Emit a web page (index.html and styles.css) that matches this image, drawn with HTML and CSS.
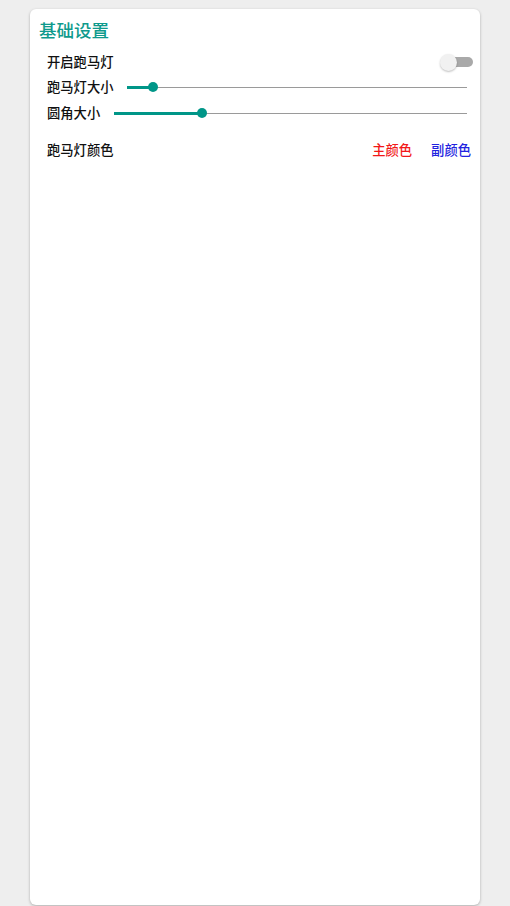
FILE: index.html
```html
<!DOCTYPE html>
<html lang="zh">
<head>
<meta charset="utf-8">
<title>基础设置</title>
<link rel="stylesheet" href="styles.css">
</head>
<body>
<div class="card">
  <div class="title">基础设置</div>
  <div class="row row-toggle">
    <span class="label">开启跑马灯</span>
    <span class="switch"><span class="switch-track"></span><span class="switch-thumb"></span></span>
  </div>
  <div class="row row-s1">
    <span class="label">跑马灯大小</span>
    <div class="slider">
      <div class="slider-rail"></div>
      <div class="slider-fill" style="width:7.4%"></div>
      <div class="slider-thumb" style="left:7.4%"></div>
    </div>
  </div>
  <div class="row row-s2">
    <span class="label">圆角大小</span>
    <div class="slider">
      <div class="slider-rail"></div>
      <div class="slider-fill" style="width:25%"></div>
      <div class="slider-thumb" style="left:25%"></div>
    </div>
  </div>
  <div class="row row-color">
    <span class="label">跑马灯颜色</span>
    <div class="colors">
      <span class="c-main">主颜色</span>
      <span class="c-sub">副颜色</span>
    </div>
  </div>
</div>
</body>
</html>
```

FILE: styles.css
```css
html, body {
  margin: 0;
  padding: 0;
  background: #eeeeee;
  font-family: "Noto Sans CJK SC", "Noto Sans", sans-serif;
}
body {
  padding: 9px 30px 0;
  height: 906px;
  box-sizing: border-box;
  overflow: hidden;
}
.card {
  background: #ffffff;
  border-radius: 6px;
  box-shadow: 0 1px 3px rgba(0,0,0,0.28);
  height: 896px;
  padding: 8px 7px 0 9px;
  box-sizing: border-box;
}
.title {
  font-size: 17.5px;
  line-height: 26px;
  font-weight: 500;
  color: #0f9a8c;
}
.row {
  display: flex;
  align-items: center;
  height: 20px;
  padding-left: 8px;
}
.label {
  font-size: 13.3px;
  line-height: 20px;
  font-weight: 500;
  color: #111;
  white-space: nowrap;
}
.row-toggle { margin-top: 9px; justify-content: space-between; }
.row-s1 { margin-top: 5px; }
.row-s2 { margin-top: 6px; }
.row-color { margin-top: 17px; justify-content: space-between; padding-right: 2px; }

.switch {
  position: relative;
  width: 33px;
  height: 18px;
  display: block;
}
.switch-track {
  position: absolute;
  right: 0;
  top: 4px;
  width: 26px;
  height: 10px;
  border-radius: 5px;
  background: #a9a9a9;
}
.switch-thumb {
  position: absolute;
  left: 0;
  top: 1px;
  width: 17px;
  height: 17px;
  border-radius: 50%;
  background: #f1f1f1;
  box-shadow: 0 1px 2px rgba(0,0,0,0.25);
}

.slider {
  position: relative;
  flex: 1;
  height: 12px;
  margin-left: 14px;
  margin-right: 6px;
}
.slider-rail {
  position: absolute;
  left: 0;
  right: 0;
  top: 5.5px;
  height: 1px;
  background: #9a9a9a;
}
.slider-fill {
  position: absolute;
  left: 0;
  top: 4.5px;
  height: 3px;
  background: #009688;
}
.slider-thumb {
  position: absolute;
  top: 1px;
  width: 10px;
  height: 10px;
  margin-left: -5px;
  border-radius: 50%;
  background: #009688;
}

.colors {
  display: flex;
  gap: 19px;
  font-size: 13.3px;
  line-height: 20px;
  font-weight: 500;
}
.c-main { color: #f21818; }
.c-sub { color: #2222e0; }
```
